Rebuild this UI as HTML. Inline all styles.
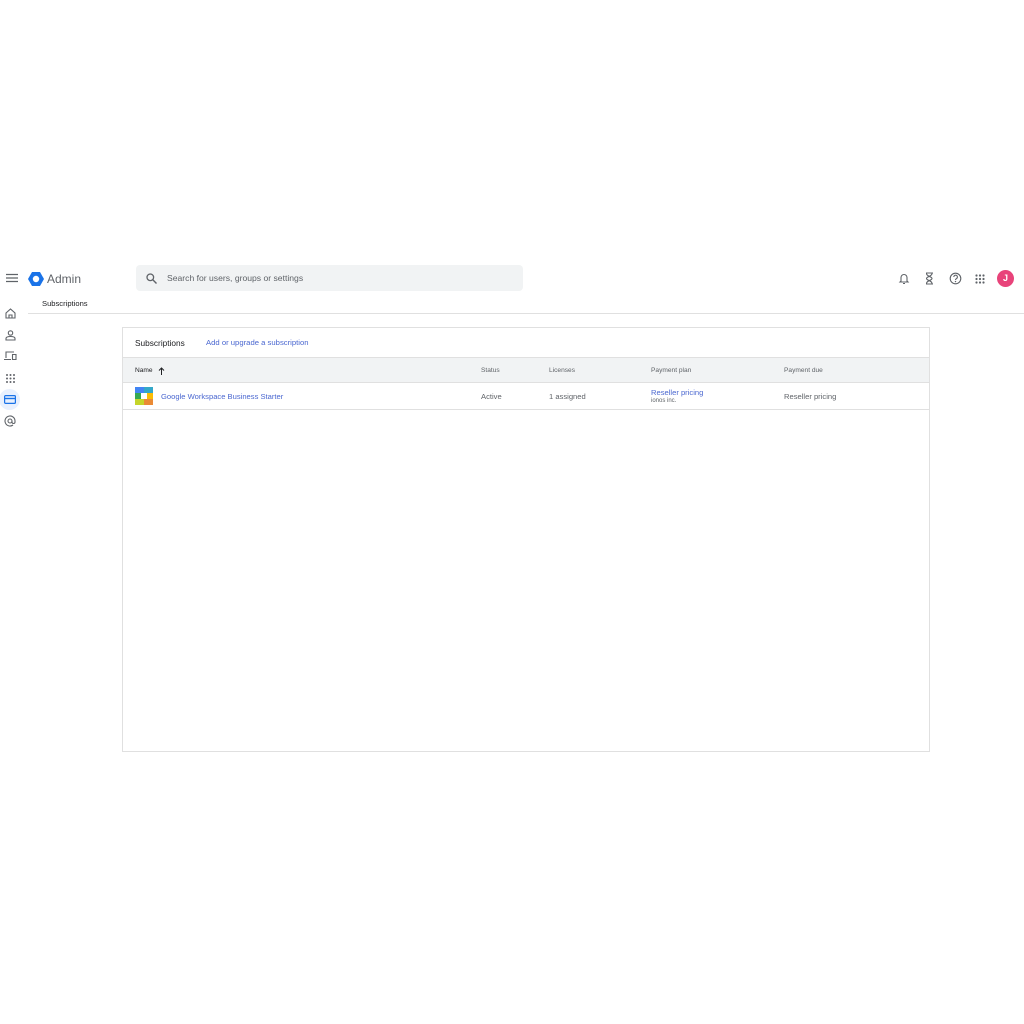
<!DOCTYPE html>
<html><head><style>
*{margin:0;padding:0;box-sizing:border-box}
body{width:1024px;height:1024px;background:#fff;font-family:"Liberation Sans",Arial,sans-serif;position:relative;overflow:hidden;color:#202124}
.a{position:absolute}
.t{font-size:8px;color:#5f6368}
.ico{position:absolute}
</style></head><body>
<svg class="ico" style="left:6px;top:273px" width="12" height="10"><path d="M0 1.5h12M0 5h12M0 8.5h12" stroke="#5f6368" stroke-width="1.3"/></svg>
<svg class="ico" style="left:28px;top:271px" width="16" height="16" viewBox="0 0 16 16"><polygon points="4,1 12,1 16,8 12,15 4,15 0,8" fill="#1a73e8"/><circle cx="8" cy="8" r="3.2" fill="#fff"/></svg>
<div class="a" style="left:47px;top:272px;font-size:12px;color:#5f6368">Admin</div>
<div class="a" style="left:136px;top:265px;width:387px;height:26px;background:#f1f3f4;border-radius:4px"></div>
<svg class="ico" style="left:146px;top:273px" width="11" height="11"><circle cx="4.3" cy="4.3" r="3.3" stroke="#5f6368" stroke-width="1.3" fill="none"/><path d="M6.8 6.8L10.5 10.5" stroke="#5f6368" stroke-width="1.4"/></svg>
<div class="a" style="left:167px;top:273px;font-size:8.6px;color:#5f6368">Search for users, groups or settings</div>
<svg class="ico" style="left:898px;top:272px" width="12" height="13"><path d="M3 9V5.5a3 3 0 016 0V9l1 1H2z" fill="none" stroke="#5f6368" stroke-width="1.1"/><path d="M5 11.5h2" stroke="#5f6368"/></svg>
<svg class="ico" style="left:925px;top:272px" width="9" height="13"><path d="M1 1h7M1 12h7M1.5 1.5c0 3 5.5 3 5.5 5s-5.5 2-5.5 5M7 1.5c0 3-5.5 3-5.5 5s5.5 2 5.5 5" fill="none" stroke="#5f6368" stroke-width="1.1"/></svg>
<svg class="ico" style="left:949px;top:272px" width="13" height="13"><circle cx="6.5" cy="6.5" r="5.3" fill="none" stroke="#5f6368" stroke-width="1.1"/><path d="M4.8 5a1.8 1.8 0 113 1.3c-.8.6-1.3.8-1.3 1.7" fill="none" stroke="#5f6368" stroke-width="1.1"/><circle cx="6.5" cy="9.6" r=".7" fill="#5f6368"/></svg>
<svg class="ico" style="left:975px;top:274px" width="10" height="10" fill="#5f6368"><circle cx="1.5" cy="1.5" r="1.1"/><circle cx="5" cy="1.5" r="1.1"/><circle cx="8.5" cy="1.5" r="1.1"/><circle cx="1.5" cy="5" r="1.1"/><circle cx="5" cy="5" r="1.1"/><circle cx="8.5" cy="5" r="1.1"/><circle cx="1.5" cy="8.5" r="1.1"/><circle cx="5" cy="8.5" r="1.1"/><circle cx="8.5" cy="8.5" r="1.1"/></svg>
<div class="a" style="left:997px;top:270px;width:17px;height:17px;border-radius:50%;background:#e8437a;color:#fff;font-size:9px;font-weight:bold;text-align:center;line-height:17px">J</div>
<div class="a" style="left:42px;top:299px;font-size:7.6px;color:#202124">Subscriptions</div>
<div class="a" style="left:28px;top:313px;width:996px;height:1px;background:#e0e0e0"></div>
<svg class="ico" style="left:5px;top:308px" width="11" height="11"><path d="M1 5L5.5 1 10 5v5H1z M4 10V7h3v3" fill="none" stroke="#5f6368" stroke-width="1.1"/></svg>
<svg class="ico" style="left:5px;top:330px" width="11" height="11"><circle cx="5.5" cy="3" r="2.2" fill="none" stroke="#5f6368" stroke-width="1.1"/><path d="M1 10V8.5c0-1.5 2.5-2 4.5-2s4.5.5 4.5 2V10z" fill="none" stroke="#5f6368" stroke-width="1.1"/></svg>
<svg class="ico" style="left:4px;top:351px" width="13" height="10"><path d="M2 7V1h8M0 8.5h7M8.5 3.5h3.5v5H8.5z" fill="none" stroke="#5f6368" stroke-width="1.1"/></svg>
<svg class="ico" style="left:6px;top:374px" width="9" height="9" fill="#5f6368"><circle cx="1" cy="1" r="1"/><circle cx="4.5" cy="1" r="1"/><circle cx="8" cy="1" r="1"/><circle cx="1" cy="4.5" r="1"/><circle cx="4.5" cy="4.5" r="1"/><circle cx="8" cy="4.5" r="1"/><circle cx="1" cy="8" r="1"/><circle cx="4.5" cy="8" r="1"/><circle cx="8" cy="8" r="1"/></svg>
<div class="a" style="left:-1px;top:389px;width:21px;height:21px;border-radius:50%;background:#e8f0fe"></div>
<svg class="ico" style="left:4px;top:395px" width="12" height="9"><rect x=".6" y=".6" width="10.8" height="7.8" rx="1" fill="none" stroke="#1a73e8" stroke-width="1.2"/><path d="M.6 3.5h10.8" stroke="#1a73e8" stroke-width="1.4"/></svg>
<svg class="ico" style="left:4px;top:415px" width="12" height="12"><circle cx="6" cy="6" r="2" fill="none" stroke="#5f6368" stroke-width="1.1"/><path d="M8 6v1a1.5 1.5 0 003 0V6a5 5 0 10-2 4" fill="none" stroke="#5f6368" stroke-width="1.1"/></svg>
<div class="a" style="left:122px;top:327px;width:808px;height:425px;border:1px solid #e0e0e0"></div>
<div class="a" style="left:135px;top:338px;font-size:8.3px;color:#202124">Subscriptions</div>
<div class="a" style="left:206px;top:338px;font-size:7.7px;color:#4a67d0">Add or upgrade a subscription</div>
<div class="a" style="left:123px;top:357px;width:806px;height:26px;background:#f1f3f4;border-top:1px solid #e0e0e0;border-bottom:1px solid #e0e0e0"></div>
<div class="a" style="left:135px;top:367px;font-size:6.6px;color:#202124">Name</div>
<svg class="ico" style="left:158px;top:367px" width="7" height="8"><path d="M3.5 8V1M1 3.5L3.5 1 6 3.5" fill="none" stroke="#202124" stroke-width="1"/></svg>
<div class="a t" style="left:481px;top:367px;font-size:6.6px">Status</div>
<div class="a t" style="left:549px;top:367px;font-size:6.6px">Licenses</div>
<div class="a t" style="left:651px;top:367px;font-size:6.6px">Payment plan</div>
<div class="a t" style="left:784px;top:367px;font-size:6.6px">Payment due</div>
<svg class="ico" style="left:135px;top:387px" width="18" height="18"><rect width="18" height="18" rx="2" fill="#34a853"/><rect x="0" y="0" width="9" height="6" fill="#4285f4"/><rect x="9" y="0" width="9" height="6" fill="#34a8c8"/><rect x="12" y="6" width="6" height="6" fill="#fbbc04"/><rect x="9" y="12" width="9" height="6" fill="#ea8a35"/><rect x="0" y="12" width="9" height="6" fill="#c5d52a"/><rect x="6" y="6" width="6" height="6" fill="#fff"/></svg>
<div class="a" style="left:161px;top:392px;font-size:7.6px;color:#4a67d0">Google Workspace Business Starter</div>
<div class="a t" style="left:481px;top:392px;font-size:7.6px">Active</div>
<div class="a t" style="left:549px;top:392px;font-size:7.6px">1 assigned</div>
<div class="a" style="left:651px;top:388px;font-size:7.6px;color:#4a67d0">Reseller pricing</div>
<div class="a t" style="left:651px;top:398px;font-size:6px">ionos inc.</div>
<div class="a t" style="left:784px;top:392px;font-size:7.6px">Reseller pricing</div>
<div class="a" style="left:123px;top:409px;width:806px;height:1px;background:#e0e0e0"></div>
</body></html>
